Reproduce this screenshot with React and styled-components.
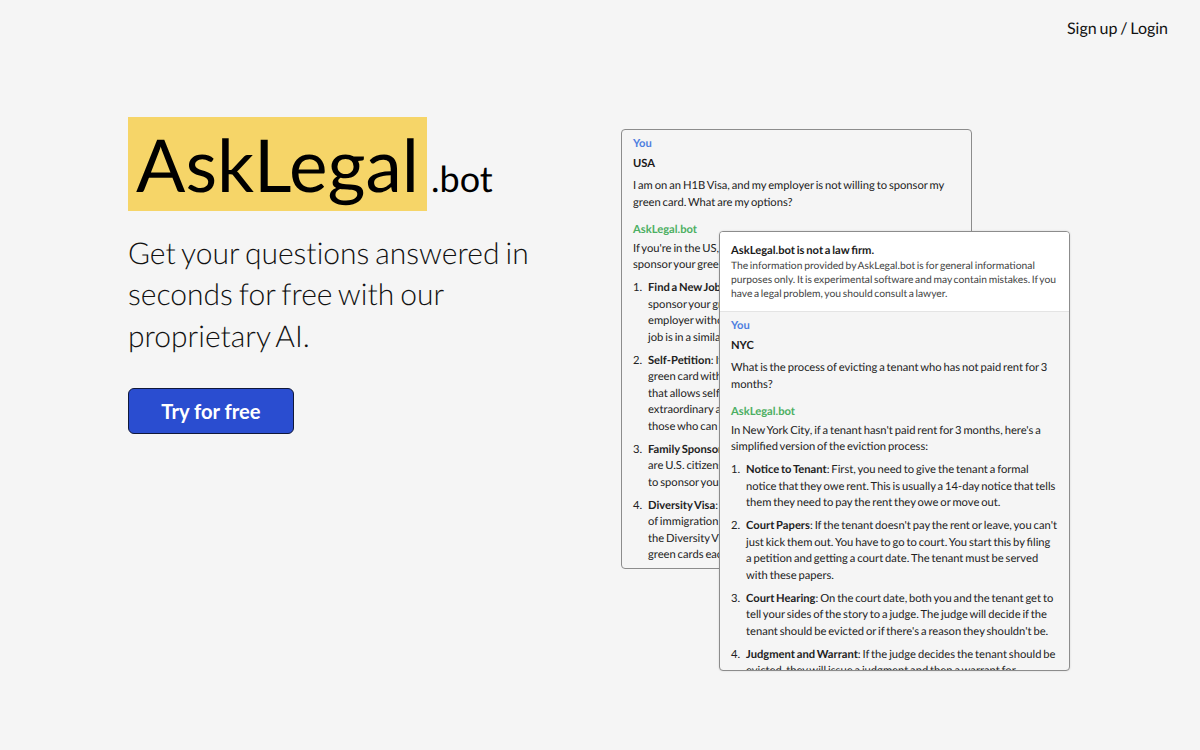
import React from 'react'
import styled, { createGlobalStyle } from 'styled-components'

const Global = createGlobalStyle`
    html, body {
        margin: 0;
        padding: 0;
        background-color: #f5f5f5;
        font-family: Lato, "Open Sans", sans-serif;
        text-rendering: geometricPrecision;
        word-spacing: -0.06em;
        color: #000;
    }
`;

const Page = styled.div`
    width: 1200px;
    height: 750px;
    overflow: hidden;
    display: flex;
    flex-direction: column;
`;

const Header = styled.header`
    display: flex;
    justify-content: flex-end;
    height: 56px;
    padding: 18px 32px 0 0;
    box-sizing: border-box;
`;

const LoginLink = styled.a`
    font-size: 16px;
    word-spacing: -0.08em;
    line-height: 21px;
    color: #111;
`;

const Main = styled.main`
    display: flex;
    justify-content: space-between;
    padding: 61px 130px 0 128px;
`;

const Hero = styled.section`
    width: 420px;
`;

const Brand = styled.div`
    display: flex;
    align-items: baseline;
`;

const Highlight = styled.h1`
    margin: 0;
    width: 299px;
    height: 94px;
    padding-left: 8px;
    box-sizing: border-box;
    background-color: #f6d568;
    font-size: 73px;
    font-weight: 400;
    line-height: 94px;
    white-space: nowrap;
`;

const Tld = styled.span`
    margin-left: 4px;
    font-size: 36px;
    line-height: 46px;
`;

const Tagline = styled.p`
    margin: 22px 0 0;
    font-size: 30px;
    font-weight: 300;
    font-variant-ligatures: none;
    word-spacing: -0.07em;
    line-height: 41.3px;
    color: #111;
`;

const Cta = styled.button`
    display: block;
    margin-top: 31px;
    width: 166px;
    height: 46px;
    padding: 0;
    background-color: #2a4dd0;
    border: 1px solid #10183a;
    border-radius: 6px;
    color: #fff;
    font-family: inherit;
    font-size: 20.2px;
    font-weight: 700;
`;

const Stack = styled.div`
    position: relative;
    width: 449px;
    margin-top: 12px;
`;

const Card = styled.article`
    width: 351px;
    height: 440px;
    box-sizing: border-box;
    overflow: hidden;
    background-color: #f5f5f5;
    border: 1px solid #8c8c8c;
    border-radius: 4px;
    font-size: 11.2px;
    line-height: 16.5px;
    color: #222;
`;

const FrontCard = styled(Card)`
    position: absolute;
    top: 102px;
    left: 98px;
    box-shadow: 0 0 2px rgba(0,0,0,.15);
`;

const Notice = styled.div`
    height: 80px;
    box-sizing: border-box;
    padding: 11px 11px 0;
    background-color: #fff;
    border-bottom: 1px solid #e4e4e4;
`;

const NoticeTitle = styled.div`
    font-weight: 700;
    font-size: 11.2px;
    line-height: 16px;
    color: #1a1a1a;
`;

const NoticeText = styled.div`
    font-size: 10.3px;
    line-height: 14px;
    color: #444;
`;

const Thread = styled.div`
    padding: 6px 11px 0;
`;

const Speaker = styled.div`
    font-weight: 700;
    line-height: 16px;
    color: ${(p) => (p.$bot ? '#4caf62' : '#4f7fe0')};
    margin-top: ${(p) => (p.$bot ? '10.5px' : '0')};
`;

const Place = styled.div`
    font-weight: 700;
    line-height: 16px;
    margin-top: 4px;
    color: #1a1a1a;
`;

const Paragraph = styled.p`
    margin: ${(p) => (p.$tight ? '3px' : '6px')} 0 0;
`;

const Steps = styled.ol`
    list-style: none;
    margin: 6.5px 0 0;
    padding: 0;
`;

const Step = styled.li`
    display: flex;
    margin-bottom: 6.5px;
`;

const StepNumber = styled.span`
    flex: none;
    width: 15px;
`;

const StepBody = styled.div`
    white-space: pre-line;
`;

const usaSteps = [
    ['Find a New Job', ": If your current employer will not agree to\nsponsor your green card, you can look for a new job with an\nemployer without losing your H1B visa status, as long as the new\njob is in a similar field."],
    ['Self-Petition', ": If you qualify, you could apply for your own\ngreen card without an employer sponsor. There is a visa category\nthat allows self-petition for people who can demonstrate their\nextraordinary ability in their field, as well as another for\nthose who can show national interest."],
    ['Family Sponsorship', ": If you have a spouse or close relatives who\nare U.S. citizens or permanent residents, you could ask them\nto sponsor your green card."],
    ['Diversity Visa', ": If you come from a country with low rates\nof immigration to the U.S., you may be able to apply through\nthe Diversity Visa lottery, which gives out about 50,000\ngreen cards each year."],
];

const nycSteps = [
    ['Notice to Tenant', ': First, you need to give the tenant a formal notice that they owe rent. This is usually a 14-day notice that tells them they need to pay the rent they owe or move out.'],
    ['Court Papers', ": If the tenant doesn't pay the rent or leave, you can't just kick them out. You have to go to court. You start this by filing a\u00a0petition and getting a court date. The tenant must be served with these papers."],
    ['Court Hearing', ": On the court date, both you and the tenant get to tell your sides of the story to a judge. The judge will decide if the tenant should be evicted or if there's a reason they shouldn't be."],
    ['Judgment and Warrant', ': If the judge decides the tenant should be evicted, they will issue a judgment and then a warrant for eviction.'],
];

function StepList({ steps }) {
    return (
        <Steps>
            {steps.map(([title, text], i) => (
                <Step key={title}>
                    <StepNumber>{i + 1}.</StepNumber>
                    <StepBody><b>{title}</b>{text}</StepBody>
                </Step>
            ))}
        </Steps>
    )
}

function Conversation({ place, question, answer, steps }) {
    return (
        <Thread>
            <Speaker>You</Speaker>
            <Place>{place}</Place>
            <Paragraph>{question}</Paragraph>
            <Speaker $bot>AskLegal.bot</Speaker>
            <Paragraph $tight>{answer}</Paragraph>
            <StepList steps={steps} />
        </Thread>
    )
}

export default function App() {
    return (
        <Page>
            <Global />
            <Header>
                <LoginLink>Sign up / Login</LoginLink>
            </Header>
            <Main>
                <Hero>
                    <Brand>
                        <Highlight>AskLegal</Highlight>
                        <Tld>.bot</Tld>
                    </Brand>
                    <Tagline>Get your questions answered in seconds for free with our proprietary AI.</Tagline>
                    <Cta>Try for free</Cta>
                </Hero>
                <Stack>
                    <Card>
                        <Conversation
                            place="USA"
                            question="I am on an H1B Visa, and my employer is not willing to sponsor my green card. What are my options?"
                            answer="If you're in the US, on an H1B Visa, and your employer refuses to sponsor your green card, you still have some options:"
                            steps={usaSteps}
                        />
                    </Card>
                    <FrontCard>
                        <Notice>
                            <NoticeTitle>AskLegal.bot is not a law firm.</NoticeTitle>
                            <NoticeText>The information provided by AskLegal.bot is for general informational purposes only. It is experimental software and may contain mistakes. If you have a legal problem, you should consult a lawyer.</NoticeText>
                        </Notice>
                        <Conversation
                            place="NYC"
                            question="What is the process of evicting a tenant who has not paid rent for 3 months?"
                            answer="In New York City, if a tenant hasn't paid rent for 3 months, here's a simplified version of the eviction process:"
                            steps={nycSteps}
                        />
                    </FrontCard>
                </Stack>
            </Main>
        </Page>
    )
}
